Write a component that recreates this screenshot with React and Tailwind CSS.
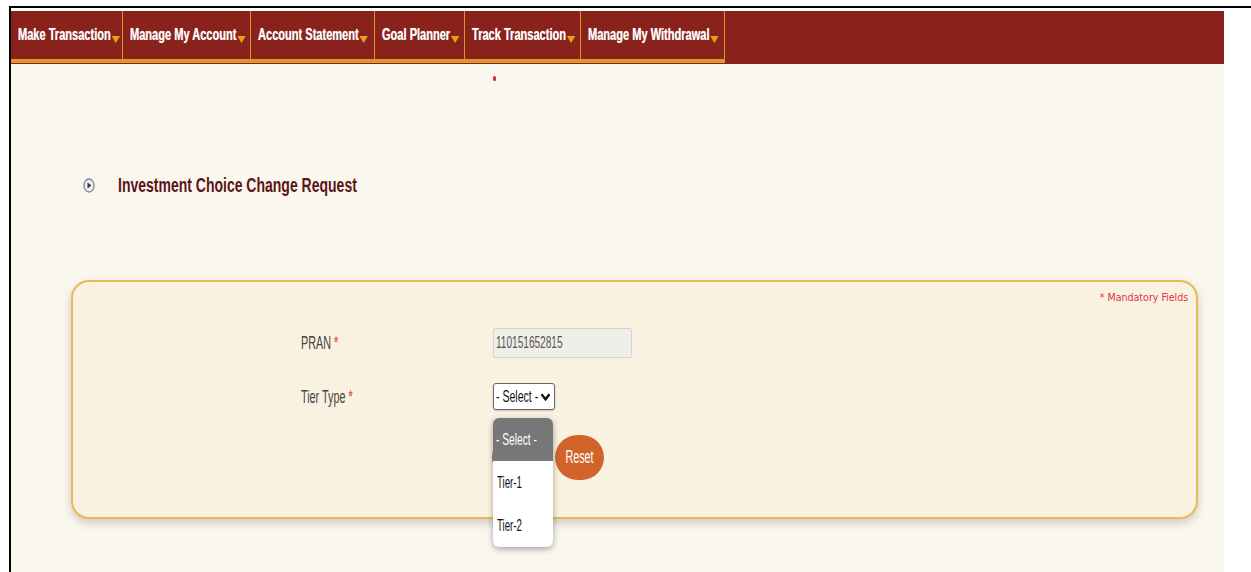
import React from "react";

const SANS = { fontFamily: '"Liberation Sans", Arial, sans-serif' };

const navItems = [
  { label: "Make Transaction", w: "w-[112px]" },
  { label: "Manage My Account", w: "w-[128px]" },
  { label: "Account Statement", w: "w-[124px]" },
  { label: "Goal Planner", w: "w-[90px]" },
  { label: "Track Transaction", w: "w-[116px]" },
  { label: "Manage My Withdrawal", w: "w-[144px]" },
];

function Caret() {
  return (
    <svg width="13" height="7" viewBox="0 0 13 7" className="ml-[1px] mt-[9px] shrink-0">
      <path d="M0 0 H13 L6.5 7 Z" fill="#e3a21a" />
    </svg>
  );
}

function NavBar() {
  return (
    <nav className="flex h-[53px] w-full bg-[#8a221c]" style={SANS}>
      {navItems.map((it) => (
        <div
          key={it.label}
          className={`${it.w} flex h-[52px] shrink-0 items-center border-r border-b-4 border-[#d99a2b] pl-[7px] text-[17px] font-bold text-white`}
        >
          <span className="inline-flex origin-left scale-x-[0.65] items-center whitespace-nowrap [text-shadow:0_0_1px_rgba(255,255,255,0.6)]">
            {it.label}
            <Caret />
          </span>
        </div>
      ))}
    </nav>
  );
}

function Label({ children }) {
  return (
    <div className="h-[24px] text-[18px] leading-[24px] text-[#444]">
      <span className="inline-block origin-left scale-x-[0.6] whitespace-nowrap">
        {children} <span className="text-[#e2343f]">*</span>
      </span>
    </div>
  );
}

export default function App() {
  return (
    <div className="relative h-[572px] w-[1251px] overflow-hidden bg-white" style={SANS}>
      <div className="ml-[9px] mt-[6px] h-[600px] border-l-2 border-t-2 border-black pt-[3px]">
        <div className="w-[1213px]">
          <NavBar />
          <main className="relative h-[520px] bg-[#faf7ef] pt-[107px]">
            <span className="absolute left-[482px] top-[12px] h-[5px] w-[3px] rounded-full bg-[#e3242b]" />

            {/* page heading */}
            <div className="flex h-[28px] items-center pl-[72px]">
              <svg width="12" height="15" viewBox="0 0 12 15" className="shrink-0">
                <ellipse cx="6" cy="7.5" rx="5" ry="6.5" fill="#eef1f3" stroke="#7d8a94" strokeWidth="1.3" />
                <path d="M4.5 4.5 L8.5 7.5 L4.5 10.5 Z" fill="#2f3a44" />
              </svg>
              <h1 className="ml-[23px] text-[20px] font-bold leading-[28px] text-[#5a1616]">
                <span className="inline-block origin-left scale-x-[0.7] whitespace-nowrap">
                  Investment Choice Change Request
                </span>
              </h1>
            </div>

            {/* request form card */}
            <div className="relative ml-[60px] mt-[81px] h-[239px] w-[1127px] rounded-[18px] border-2 border-[#e9bb55] bg-[#faf2e1] shadow-[0_4px_10px_rgba(0,0,0,0.18)]">
              <div
                className="h-[24px] pr-[8px] pt-[8px] text-right text-[11px] leading-[16px] text-[#e2343f]"
                style={{ fontFamily: '"DejaVu Sans Condensed", "DejaVu Sans", sans-serif' }}
              >
                <span className="inline-block origin-right scale-x-[0.96] whitespace-nowrap">* Mandatory Fields</span>
              </div>

              <div className="ml-[228px] mt-[22px] grid grid-cols-[192px_auto] items-center gap-y-[25px]">
                <Label>PRAN</Label>
                <div className="flex h-[30px] w-[139px] items-center overflow-hidden rounded-[2px] border border-[#d6d3cc] bg-[#f0eee8] pl-[2px] text-[16px] text-[#555]">
                  <span className="inline-block origin-left scale-x-[0.63] whitespace-nowrap">110151652815</span>
                </div>

                <Label>Tier Type</Label>
                <div>
                  <div className="relative flex h-[27px] w-[62px] items-center rounded-[3px] border border-[#666] bg-white pl-[2px] text-[17px] text-[#111] shadow-[0_1px_2px_rgba(0,0,0,0.2)]">
                    <span className="inline-block origin-left scale-x-[0.62] whitespace-nowrap">- Select -</span>
                    <svg width="11" height="8" viewBox="0 0 11 8" className="absolute right-[3px] top-[9px]">
                      <path d="M1.5 1.2 L5.5 6.3 L9.5 1.2" fill="none" stroke="#111" strokeWidth="2.4" />
                    </svg>
                  </div>
                </div>

                <div />
                <div className="-ml-[1px] flex items-center gap-[3px]">
                  {/* submit sits beneath the open list */}
                  <button aria-label="Submit" className="h-[45px] w-[60px] rounded-full bg-[#d0642a]" />
                  <button className="h-[45px] w-[49px] overflow-hidden rounded-full bg-[#d0642a] text-[18px] text-white">
                    <span className="inline-block scale-x-[0.6]">Reset</span>
                  </button>
                </div>
              </div>

              {/* open select list */}
              <div className="absolute left-[420px] top-[136px] w-[60px] overflow-hidden rounded-[6px] bg-white text-[17px] shadow-[0_2px_6px_rgba(0,0,0,0.35)]">
                <div className="flex h-[43px] items-center bg-[#777] pl-[3px] text-white">
                  <span className="inline-block origin-left scale-x-[0.6] whitespace-nowrap">- Select -</span>
                </div>
                <div className="flex h-[43px] items-center pl-[4px] text-[#111122]">
                  <span className="inline-block origin-left scale-x-[0.57] whitespace-nowrap">Tier-1</span>
                </div>
                <div className="flex h-[43px] items-center pl-[4px] text-[#111122]">
                  <span className="inline-block origin-left scale-x-[0.57] whitespace-nowrap">Tier-2</span>
                </div>
              </div>
            </div>
          </main>
        </div>
      </div>
    </div>
  );
}
